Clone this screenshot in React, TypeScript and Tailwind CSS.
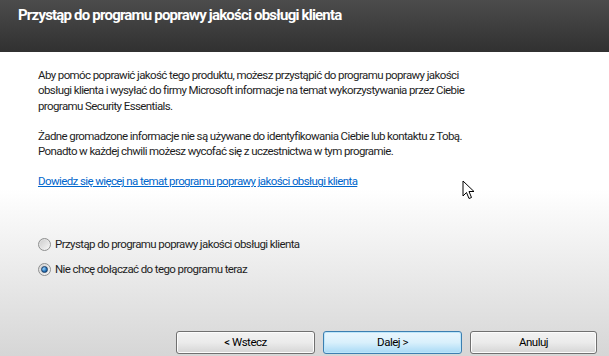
import React from "react";

function Radio({ checked }: { checked?: boolean }) {
  return (
    <span className="relative flex h-[13px] w-[13px] shrink-0 items-center justify-center rounded-full border border-[#8e8f8f] bg-gradient-to-br from-[#d9d9d9] to-[#f6f6f6]">
      <span className="h-[9px] w-[9px] rounded-full bg-gradient-to-br from-[#cfcfcf] to-[#f4f4f4]" />
      {checked && (
        <span className="absolute h-[7px] w-[7px] rounded-full border border-[#1c3d66] bg-[radial-gradient(circle_at_35%_35%,#9cd4ff,#1e6fb5_60%,#0d3f78)]" />
      )}
    </span>
  );
}

function Button({ label, primary, wide = true }: { label: string; primary?: boolean; wide?: boolean }) {
  const size = wide ? "w-[139px]" : "w-[127px]";
  return (
    <button
      className={
        primary
          ? `flex h-[23px] ${size} items-center justify-center rounded-[3px] border border-[#3c7fb1] bg-gradient-to-b from-[#eaf6fd] via-[#d9f0fc] to-[#a7d9f5] text-[11.5px] tracking-[-0.5px] text-black shadow-[inset_0_0_0_1px_#bde6fa]`
          : `flex h-[23px] ${size} items-center justify-center rounded-[3px] border border-[#707070] bg-gradient-to-b from-[#f2f2f2] via-[#ebebeb] to-[#d5d5d5] text-[11.5px] tracking-[-0.5px] text-black shadow-[inset_0_0_0_1px_#fcfcfc]`
      }
    >
      {label}
    </button>
  );
}

export default function App() {
  return (
    <div
      className="relative flex h-[356px] w-[609px] flex-col overflow-hidden"
      style={{ fontFamily: 'Roboto, "Noto Sans", sans-serif' }}
    >
      {/* Header */}
      <div className="h-[52px] shrink-0 bg-gradient-to-b from-[#4c4c4c] to-[#313131] px-[18px] pt-[5px]">
        <h1 className="text-[15px] font-bold leading-[20px] tracking-[-0.8px] text-white">
          Przystąp do programu poprawy jakości obsługi klienta
        </h1>
      </div>

      {/* Content */}
      <div className="flex flex-1 flex-col bg-gradient-to-b from-white from-[45%] to-[#d6d6d6] px-[38px] pt-[16px] text-[11.5px] leading-[15.3px] tracking-[-0.6px] text-[#1e1e1e]">
        <p>
          Aby pomóc poprawić jakość tego produktu, możesz przystąpić do programu poprawy jakości
          <br />
          obsługi klienta i wysyłać do firmy Microsoft informacje na temat wykorzystywania przez Ciebie
          <br />
          programu Security Essentials.
        </p>
        <p className="mt-[15px]">
          Żadne gromadzone informacje nie są używane do identyfikowania Ciebie lub kontaktu z Tobą.
          <br />
          Ponadto w każdej chwili możesz wycofać się z uczestnictwa w tym programie.
        </p>
        <a className="mt-[15px] w-fit text-[#0066cc] underline">
          Dowiedz się więcej na temat programu poprawy jakości obsługi klienta
        </a>

        <div className="mt-[47px] flex flex-col gap-[10px]">
          <label className="flex items-center gap-[4px]">
            <Radio />
            <span>Przystąp do programu poprawy jakości obsługi klienta</span>
          </label>
          <label className="flex items-center gap-[4px]">
            <Radio checked />
            <span>Nie chcę dołączać do tego programu teraz</span>
          </label>
        </div>

        <div className="mt-auto mb-[2px] -mr-[26px] flex justify-end gap-[8px]">
          <Button label="< Wstecz" />
          <Button label="Dalej >" primary />
          <Button label="Anuluj" wide={false} />
        </div>
      </div>

      {/* Mouse cursor */}
      <svg className="absolute left-[462px] top-[180px]" width="14" height="22" viewBox="0 0 14 22">
        <path
          d="M1 1 L1 16 L4.5 12.5 L7 18.5 L9.5 17.5 L7 11.5 L12 11.5 Z"
          fill="white"
          stroke="black"
          strokeWidth="1"
          strokeLinejoin="round"
        />
      </svg>
    </div>
  );
}
